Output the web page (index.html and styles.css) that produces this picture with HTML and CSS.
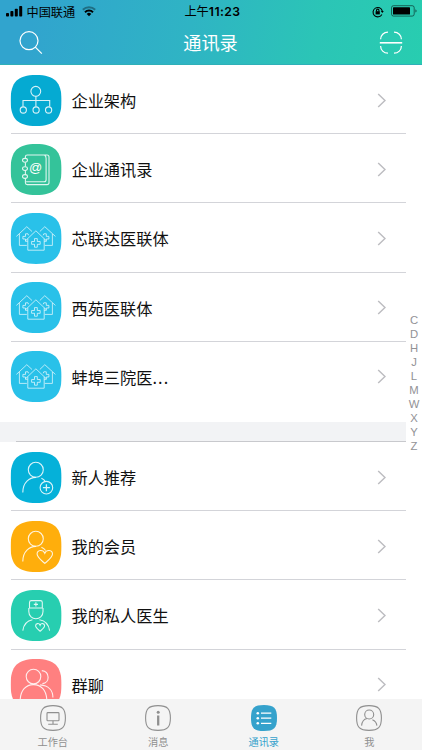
FILE: index.html
```html
<!DOCTYPE html>
<html lang="zh-CN">
<head>
<meta charset="utf-8">
<title>通讯录</title>
<link rel="stylesheet" href="styles.css">
</head>
<body>
<svg class="defs" width="0" height="0">
  <defs>
    <path id="tile" d="M25.5 0C44 0 51 7 51 25.5S44 51 25.5 51 0 44 0 25.5 7 0 25.5 0Z"/>
    <path id="chev" d="M1.2 1 8 7.5 1.2 14"/>
    <g id="houses">
      <path d="M16.2 32.4H8.8V21M5.8 23.4 16.2 13.7 21.4 18.5M34.2 32.4H41.8V21M44.8 23.4 34.2 13.7 29.2 18.5"/>
      <path d="M17.2 25.8V37.2H33.6V25.8M14.8 27.8 25.3 17.8 35.8 27.8"/>
      <path d="M23.9 25.6h2.8v2.9h2.9v2.8h-2.9v2.9h-2.8v-2.9H21v-2.8h2.9Z"/>
      <path d="M18 22.3l-.6-1.5h-2.5v2.6h-2.6V26h2.6v2.3H17M32.6 22.3l.6-1.5h2.5v2.6h2.6V26h-2.6v2.3h-2.1"/>
    </g>
  </defs>
</svg>
<div class="app">
  <header class="top">
    <div class="status">
      <div class="carrier">
        <svg width="17" height="11" viewBox="0 0 17 11"><rect x="0" y="7" width="3" height="3.5" rx=".8"/><rect x="4.4" y="5" width="3" height="5.5" rx=".8"/><rect x="8.8" y="2.7" width="3" height="7.8" rx=".8"/><rect x="13.2" y="0" width="3" height="10.5" rx=".8"/></svg>
        <span>中国联通</span>
        <svg class="wifi" width="14" height="11" viewBox="0 0 14 11" fill="none" stroke="#000" stroke-width="2"><path d="M.8 3.8a9 9 0 0 1 12.4 0" opacity=".35"/><path d="M3 6.2a5.8 5.8 0 0 1 8 0"/><path d="M4.7 7.9a3.4 3.4 0 0 1 4.6 0L7 10.3Z" fill="#000" stroke="none"/></svg>
      </div>
      <div class="time">上午<b>11:23</b></div>
      <div class="power">
        <svg width="12" height="12" viewBox="0 0 12 12" fill="none" stroke="#000" stroke-width="1.1"><path d="M9.9 8.4A4.7 4.7 0 1 1 10.3 5"/><path d="M8.8 5h3L10.3 7Z" fill="#000" stroke="none"/><rect x="3.6" y="5.2" width="4.2" height="3.2" fill="#000" stroke="none"/><path d="M4.5 5.4V4.3a1.2 1.2 0 0 1 2.4 0v1.1"/></svg>
        <svg class="battery" width="26" height="12" viewBox="0 0 26 12"><rect x=".5" y=".7" width="22.7" height="10.4" rx="2" fill="none" stroke="#000" stroke-opacity=".5"/><rect x="2" y="2.2" width="17" height="7.4" rx=".6"/><path d="M24.3 4.2q1.4.5 1.4 1.7t-1.4 1.7Z" opacity=".5"/></svg>
      </div>
    </div>
    <div class="nav">
      <svg width="24" height="24" viewBox="0 0 24 24"><circle cx="10" cy="9.7" r="9"/><path d="M16.3 16.2 22.8 22.7"/></svg>
      <h1>通讯录</h1>
      <svg width="24" height="24" viewBox="0 0 24 24"><path d="M1.6 8.3C1.6 4.2 4.7 1.2 9 1.2M15 1.2c4.3 0 7.4 3 7.4 7.1M1.6 15c0 4.1 3.1 7.1 7.4 7.1M15 22.1c4.3 0 7.4-3 7.4-7.1"/><path d="M.8 11.8H23.2" stroke-width="1.6"/></svg>
    </div>
  </header>

  <main class="content">
    <ul class="list">
      <li class="row"><svg class="icon" viewBox="0 0 51 51"><use href="#tile" fill="#05aad2"/><g><circle cx="25.2" cy="16.3" r="4.9"/><path d="M25.3 21.2V31.5M12.4 31.5V25.5H39.1V31.5"/><circle cx="12.7" cy="35" r="3.1"/><circle cx="25.5" cy="35" r="3.1"/><circle cx="38" cy="35" r="3.1"/></g></svg><span class="name">企业架构</span><svg class="chevron" viewBox="0 0 9 15"><use href="#chev"/></svg></li>
      <li class="row"><svg class="icon" viewBox="0 0 51 51"><use href="#tile" fill="#34c39a"/><g><path d="M14.8 14V12.8Q14.8 11 16.6 11H36.4Q38.4 11 38.4 13V38.7Q38.4 40.6 36.4 40.6H16.6Q14.8 40.6 14.8 38.8V34.5M14.8 18.5V22.5M14.8 26.5V30.5M15.5 37.8H33.5Q35.5 37.8 35.5 35.8V14.5Q35.5 12 34 11.3"/><ellipse cx="14.4" cy="16.3" rx="2.5" ry="1.9"/><ellipse cx="14.4" cy="24.6" rx="2.5" ry="1.9"/><ellipse cx="14.4" cy="32.5" rx="2.5" ry="1.9"/></g><text class="at" x="24.9" y="27.6">@</text></svg><span class="name">企业通讯录</span><svg class="chevron" viewBox="0 0 9 15"><use href="#chev"/></svg></li>
      <li class="row"><svg class="icon" viewBox="0 0 51 51"><use href="#tile" fill="#29c1e9"/><g class="thin"><use href="#houses"/></g></svg><span class="name">芯联达医联体</span><svg class="chevron" viewBox="0 0 9 15"><use href="#chev"/></svg></li>
      <li class="row"><svg class="icon" viewBox="0 0 51 51"><use href="#tile" fill="#29c1e9"/><g class="thin"><use href="#houses"/></g></svg><span class="name">西苑医联体</span><svg class="chevron" viewBox="0 0 9 15"><use href="#chev"/></svg></li>
      <li class="row"><svg class="icon" viewBox="0 0 51 51"><use href="#tile" fill="#29c1e9"/><g class="thin"><use href="#houses"/></g></svg><span class="name">蚌埠三院医<i>...</i></span><svg class="chevron" viewBox="0 0 9 15"><use href="#chev"/></svg></li>
    </ul>
    <div class="band"></div>
    <ul class="list">
      <li class="row"><svg class="icon" viewBox="0 0 51 51"><use href="#tile" fill="#05b1d9"/><g><circle cx="25.2" cy="17.8" r="7.5"/><path d="M12.2 40.5C12.2 30 19 25.5 25.3 25.4M30.8 26.3Q33.5 27.5 34.7 29.5"/><circle cx="35.8" cy="35.7" r="6.3"/><path d="M32.3 35.7H39.3M35.8 32.2V39.2" stroke-width="1.3"/></g></svg><span class="name">新人推荐</span><svg class="chevron" viewBox="0 0 9 15"><use href="#chev"/></svg></li>
      <li class="row"><svg class="icon" viewBox="0 0 51 51"><use href="#tile" fill="#ffae0c"/><g><circle cx="25.2" cy="17.8" r="7.5"/><path d="M12.2 40.5C12.2 30 19 25.5 25.3 25.4M30.8 26.3Q33.5 27.5 35 29.5"/><path d="M34.2 42.4C30 38.7 26.5 36.3 26.5 33.1C26.5 28.9 32.4 28 34.2 32.3C36 28 41.9 28.9 41.9 33.1C41.9 36.3 38.4 38.7 34.2 42.4Z"/></g></svg><span class="name">我的会员</span><svg class="chevron" viewBox="0 0 9 15"><use href="#chev"/></svg></li>
      <li class="row"><svg class="icon" viewBox="0 0 51 51"><use href="#tile" fill="#27ceb0"/><g><path d="M18.9 18V12.5Q18.9 10.6 20.8 10.6H29.8Q31.7 10.6 31.7 12.5V18ZM25.3 12.3V16.5M23.2 14.4H27.4"/><path d="M18.2 18V21.5C18.2 31.2 32.4 31.2 32.4 21.5V18M12.2 40.7C13.2 34 17.5 30.5 21.8 29.8M28.8 29.8C33.5 30.5 38 34 39 40.7"/><path d="M29.5 41.2C27 39 25 37.5 25 35.7C25 33.2 28.5 32.7 29.5 35.3C30.5 32.7 34 33.2 34 35.7C34 37.5 32 39 29.5 41.2Z"/></g></svg><span class="name">我的私人医生</span><svg class="chevron" viewBox="0 0 9 15"><use href="#chev"/></svg></li>
      <li class="row"><svg class="icon" viewBox="0 0 51 51"><use href="#tile" fill="#ff8080"/><g><circle cx="22.9" cy="17.6" r="7.3"/><path d="M9.6 42C9.6 31 15.5 25.6 22.9 25.6S36.2 31 36.2 42M31.2 11.6C39.5 12.5 39.5 24 31.8 24.6M29.5 25.9C38 26.5 42.3 31.5 42.3 38.5"/></g></svg><span class="name">群聊</span><svg class="chevron" viewBox="0 0 9 15"><use href="#chev"/></svg></li>
    </ul>
  </main>

  <nav class="index"><span>C</span><span>D</span><span>H</span><span>J</span><span>L</span><span>M</span><span>W</span><span>X</span><span>Y</span><span>Z</span></nav>

  <footer class="tabs">
    <a class="tab"><svg viewBox="0 0 26 26"><path d="M13 .6C22.4.6 25.4 3.6 25.4 13S22.4 25.4 13 25.4.6 22.4.6 13 3.6.6 13 .6Z"/><rect x="7" y="7.6" width="12" height="8.2" rx=".8"/><path d="M13 15.8V19M8.2 19.3H17.8"/></svg><span>工作台</span></a>
    <a class="tab"><svg viewBox="0 0 26 26"><path d="M13 .6C22.4.6 25.4 3.6 25.4 13S22.4 25.4 13 25.4.6 22.4.6 13 3.6.6 13 .6Z"/><circle class="dot" cx="13.2" cy="7.2" r="1.5"/><path d="M13.2 10.5V20.5" stroke-width="2.3"/></svg><span>消息</span></a>
    <a class="tab active"><svg viewBox="0 0 26 26"><path class="fill" d="M13 0C23 0 26 3 26 13S23 26 13 26 0 23 0 13 3 0 13 0Z"/><path class="lines" d="M10 8.2H20.3M10 13.2H20.3M10 18.3H20.3"/><g class="bullets"><circle cx="6.8" cy="8.2" r="1.3"/><circle cx="6.8" cy="13.2" r="1.3"/><circle cx="6.8" cy="18.3" r="1.3"/></g></svg><span>通讯录</span></a>
    <a class="tab"><svg viewBox="0 0 26 26"><path d="M13 .6C22.4.6 25.4 3.6 25.4 13S22.4 25.4 13 25.4.6 22.4.6 13 3.6.6 13 .6Z"/><circle cx="13.2" cy="9.5" r="4.5"/><path d="M5.6 20.6C6 16.5 8.3 14 11 13.5M16.4 14.7C18.9 15.7 20.6 17.8 20.9 20.6"/></svg><span>我</span></a>
  </footer>
</div>
</body>
</html>
```
FILE: styles.css
```css
* { box-sizing: border-box; }
body {
  margin: 0;
  font-family: "Noto Sans CJK SC", sans-serif;
  color: #111;
  background: #fff;
}
.defs { display: block; position: absolute; }
.app {
  position: relative;
  display: flex;
  flex-direction: column;
  width: 422px;
  height: 750px;
  overflow: hidden;
}

.top {
  flex: none;
  height: 65px;
  background: linear-gradient(100deg, #31a4ce 8%, #2fb4c4 45%, #2bc5b6 75%, #28cdb0 100%);
  border-bottom: 1px solid #2fb0b8;
}
.status {
  display: grid;
  grid-template-columns: 1fr auto 1fr;
  align-items: center;
  height: 22px;
  padding: 0 5px 0 6px;
  font-size: 12.2px;
  line-height: 22px;
  color: #000;
}
.status svg { display: block; flex: none; }
.carrier { display: flex; align-items: center; gap: 3.5px; }
.carrier .wifi { margin-left: 3px; }
.time { padding-left: 2px; }
.time b { font-family: Inter, sans-serif; font-weight: 600; font-size: 12.2px; letter-spacing: .45px; }
.power { display: flex; align-items: center; justify-content: flex-end; gap: 7px; }
.power .battery { margin-top: -1px; }
.nav {
  display: flex;
  align-items: center;
  justify-content: space-between;
  height: 42px;
  padding: 0 19px;
}
.nav svg { display: block; fill: none; stroke: #fff; stroke-width: 1.2; }
.nav h1 { margin: 0 1px 2px 0; font-size: 18.2px; line-height: 40px; font-weight: 400; color: #fff; }

.content { flex: 1; min-height: 0; overflow: hidden; }
.list { list-style: none; margin: 0 16px 0 10.5px; padding: 0; }
.row {
  display: flex;
  align-items: center;
  height: 69.2px;
  padding: 2px 20px 0 0;
  border-bottom: 1px solid #d3d4d9;
}
.row:last-child { border-bottom-color: transparent; }
.icon { display: block; flex: none; width: 51px; height: 51px; transform: translateX(-.4px); }
.icon g { fill: none; stroke: #fff; stroke-width: 1.1; stroke-opacity: .85; }
.icon .thin { stroke-width: .9; stroke-opacity: .75; }
.at { font: 13px "Liberation Sans", sans-serif; fill: #fff; text-anchor: middle; }
.name { flex: 1; margin-left: 10px; font-size: 16.2px; line-height: 24px; }
.name i { font-style: normal; letter-spacing: 1.1px; }
.chevron {
  width: 9px;
  height: 15px;
  fill: none;
  stroke: #bdbdc1;
  stroke-width: 1.5;
}
.band {
  height: 20px;
  margin: 11px 16px 0 0;
  background: linear-gradient(#c8c9cd, #c8c9cd) 16px 100% / 100% 1px no-repeat, #f2f3f5;
}

.index {
  position: absolute;
  top: 313px;
  right: 0;
  width: 16px;
  display: flex;
  flex-direction: column;
  text-align: center;
  font: 11.3px/14px "Liberation Sans", sans-serif;
  color: #929296;
}

.tabs {
  flex: none;
  display: grid;
  grid-template-columns: repeat(4, 1fr);
  height: 51px;
  background: #f4f4f4;
}
.tab {
  display: flex;
  flex-direction: column;
  align-items: center;
  padding-top: 6px;
  font-size: 10.2px;
  line-height: 14px;
  color: #8f8f8f;
}
.tab svg { display: block; width: 26px; height: 26px; margin-bottom: 4px; fill: none; stroke: #8f8f8f; stroke-width: 1.1; }
.tab .dot { fill: #8f8f8f; stroke: none; }
.tab.active { color: #35a2cc; }
.tab .fill { fill: #35a2cc; stroke: none; }
.tab .lines { stroke: #fff; stroke-width: 1.3; }
.tab .bullets { fill: #fff; stroke: none; }
```
